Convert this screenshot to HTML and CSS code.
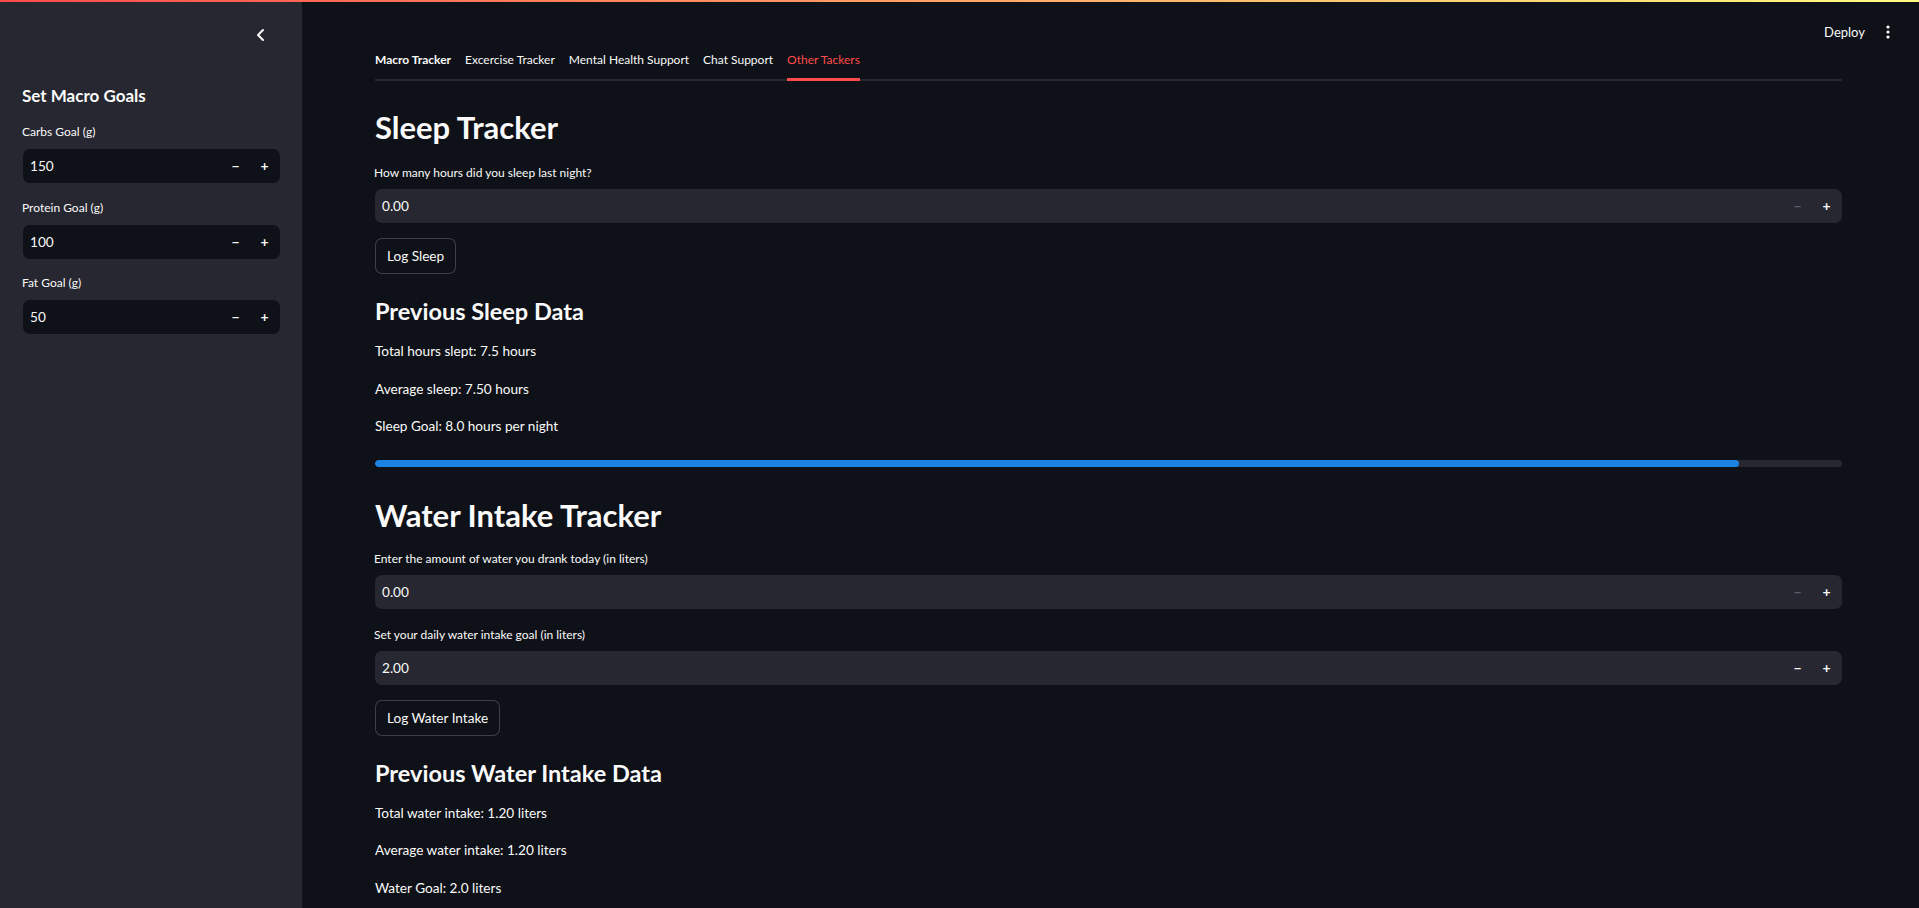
FILE: index.html
```html
<!DOCTYPE html>
<html>
<head>
<meta charset="utf-8">
<link rel="stylesheet" href="styles.css">
</head>
<body>
<div class="decoration"></div>
<div class="app">
  <aside class="sidebar">
    <div class="sidebar-top">
      <button class="collapse" aria-label="Collapse sidebar">
        <svg width="12" height="14" viewBox="0 0 12 14"><path d="M8 2 L3 7 L8 12" fill="none" stroke="#fafafa" stroke-width="2" stroke-linecap="round" stroke-linejoin="round"/></svg>
      </button>
    </div>
    <h2 class="side-title">Set Macro Goals</h2>
    <div class="field side-field">
      <label class="label">Carbs Goal (g)</label>
      <div class="num num-dark"><span class="val">150</span><span class="step">−</span><span class="step">+</span></div>
    </div>
    <div class="field side-field">
      <label class="label">Protein Goal (g)</label>
      <div class="num num-dark"><span class="val">100</span><span class="step">−</span><span class="step">+</span></div>
    </div>
    <div class="field side-field">
      <label class="label">Fat Goal (g)</label>
      <div class="num num-dark"><span class="val">50</span><span class="step">−</span><span class="step">+</span></div>
    </div>
  </aside>
  <main class="main">
    <header class="toolbar">
      <span class="deploy">Deploy</span>
      <svg class="kebab" width="4" height="14" viewBox="0 0 4 14"><circle cx="2" cy="2" r="1.6" fill="#fafafa"/><circle cx="2" cy="7" r="1.6" fill="#fafafa"/><circle cx="2" cy="12" r="1.6" fill="#fafafa"/></svg>
    </header>
    <div class="content">
      <nav class="tabs">
        <span class="tab tab-bold">Macro Tracker</span>
        <span class="tab">Excercise Tracker</span>
        <span class="tab">Mental Health Support</span>
        <span class="tab">Chat Support</span>
        <span class="tab active">Other Tackers</span>
      </nav>

      <h1 class="h1 h1-first">Sleep Tracker</h1>
      <div class="field">
        <label class="label">How many hours did you sleep last night?</label>
        <div class="num"><span class="val">0.00</span><span class="step disabled">−</span><span class="step">+</span></div>
      </div>
      <button class="btn">Log Sleep</button>
      <h3 class="h3">Previous Sleep Data</h3>
      <p class="p">Total hours slept: 7.5 hours</p>
      <p class="p">Average sleep: 7.50 hours</p>
      <p class="p">Sleep Goal: 8.0 hours per night</p>
      <div class="progress"><div class="bar" style="width: 93%"></div></div>

      <h1 class="h1 h1-second">Water Intake Tracker</h1>
      <div class="field">
        <label class="label">Enter the amount of water you drank today (in liters)</label>
        <div class="num"><span class="val">0.00</span><span class="step disabled">−</span><span class="step">+</span></div>
      </div>
      <div class="field field-next">
        <label class="label">Set your daily water intake goal (in liters)</label>
        <div class="num"><span class="val">2.00</span><span class="step">−</span><span class="step">+</span></div>
      </div>
      <button class="btn">Log Water Intake</button>
      <h3 class="h3">Previous Water Intake Data</h3>
      <p class="p">Total water intake: 1.20 liters</p>
      <p class="p">Average water intake: 1.20 liters</p>
      <p class="p">Water Goal: 2.0 liters</p>
    </div>
  </main>
</div>
</body>
</html>
```

FILE: styles.css
```css
* { box-sizing: border-box; }
html, body {
  margin: 0;
  padding: 0;
  height: 100%;
  overflow: hidden;
  background: #0e1117;
  color: #fafafa;
  font-family: "Source Sans Pro", Lato, "Noto Sans", sans-serif;
}
.decoration {
  position: fixed;
  top: 0; left: 0; right: 0;
  height: 2px;
  background: linear-gradient(90deg, #ff4b4b, #fffd80);
  z-index: 10;
}
.app {
  display: flex;
  height: 908px;
}
.sidebar {
  width: 302px;
  flex: 0 0 302px;
  background: #262730;
  padding: 0 22px 0 23px;
}
.sidebar-top {
  height: 72px;
  display: flex;
  justify-content: flex-end;
  padding-top: 27px;
  padding-right: 11px;
}
.collapse {
  background: none;
  border: 0;
  padding: 0;
  width: 16px;
  height: 16px;
  display: flex;
  align-items: center;
  justify-content: center;
  cursor: pointer;
}
.side-title {
  margin: 12px 0 0 -1px;
  font-size: 17px;
  font-weight: 700;
  line-height: 24px;
}
.field { display: flex; flex-direction: column; }
.side-field { margin-top: 15px; }
.side-field + .side-field { margin-top: 15.5px; }
.side-field .label { margin-bottom: 9px; }
.label {
  font-size: 12px;
  line-height: 17px;
  margin-left: -1px;
  margin-bottom: 8px;
}
.num {
  height: 34px;
  border-radius: 7px;
  background: #262730;
  display: flex;
  align-items: center;
  padding-left: 7px;
  font-size: 13.6px;
}
.num-dark { background: #0e1117; }
.val { flex: 1; }
.step {
  width: 29px;
  text-align: center;
  font-size: 14px;
  font-weight: 700;
  line-height: 34px;
}
.step:last-child { margin-right: 1px; }
.step.disabled { color: #5b5d68; }

.main {
  flex: 1;
  position: relative;
  padding: 0 77px 0 73px;
}
.toolbar {
  position: absolute;
  top: 22px;
  right: 29px;
  display: flex;
  align-items: center;
  gap: 21px;
  height: 20px;
}
.deploy { font-size: 13px; }
.kebab { display: block; }

.content { display: flex; flex-direction: column; align-items: flex-start; }
.content > * { align-self: stretch; }
.tabs {
  margin-top: 46px;
  display: flex;
  gap: 14px;
  border-bottom: 2px solid #262730;
  height: 35px;
}
.tab {
  font-size: 12px;
  line-height: 28px;
  height: 35px;
  margin-bottom: -2px;
  border-bottom: 2px solid transparent;
  white-space: nowrap;
}
.tab-bold { font-weight: 700; }
.tab.active {
  color: #ff4b4b;
  border-bottom: 3px solid #ff4b4b;
}
.h1 {
  margin: 0;
  font-size: 31px;
  font-weight: 700;
  line-height: 38px;
}
.h1-first { margin-top: 27px; margin-bottom: 18px; }
.h1-second { margin-top: 29px; margin-bottom: 16px; }
.field-next { margin-top: 17px; }
.btn {
  align-self: flex-start;
  margin-top: 15px;
  height: 36px;
  padding: 0 11px;
  background: #0e1117;
  color: #fafafa;
  border: 1px solid rgba(250, 250, 250, 0.2);
  border-radius: 7px;
  font-family: inherit;
  font-size: 13.6px;
}
.h3 {
  margin: 22px 0 14px;
  font-size: 23.5px;
  font-weight: 700;
  line-height: 30px;
}
.p {
  margin: 0 0 15.5px;
  font-size: 13.6px;
  line-height: 22px;
}
.progress {
  margin-top: 7px;
  height: 7px;
  border-radius: 4px;
  background: #262730;
  overflow: hidden;
}
.bar {
  height: 100%;
  background: #1c83e1;
  border-radius: 4px;
}
```
